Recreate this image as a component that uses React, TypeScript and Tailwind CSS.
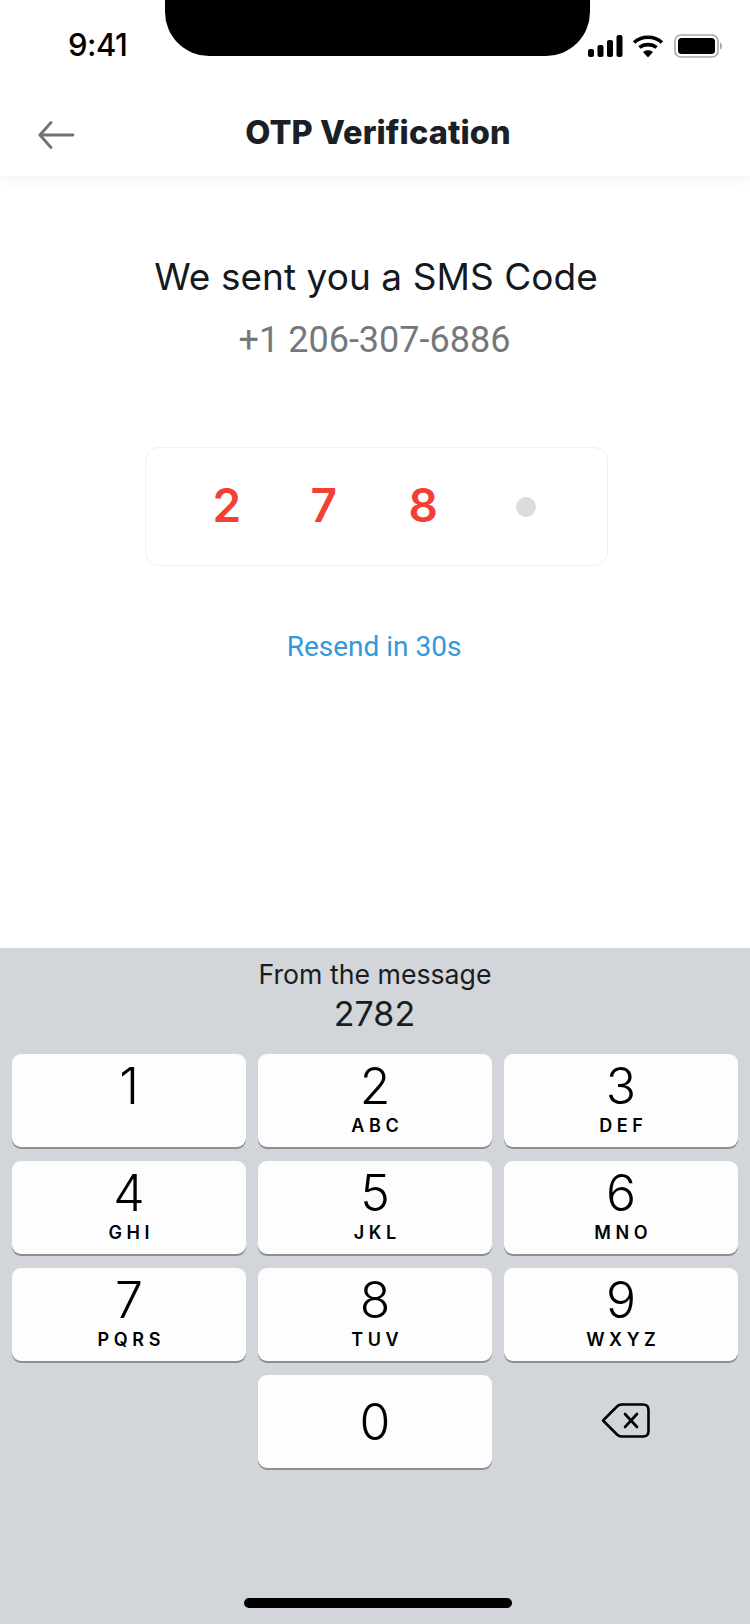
import React from "react";

const keys: [string, string][] = [
  ["1", ""],
  ["2", "ABC"],
  ["3", "DEF"],
  ["4", "GHI"],
  ["5", "JKL"],
  ["6", "MNO"],
  ["7", "PQRS"],
  ["8", "TUV"],
  ["9", "WXYZ"],
];

function Key({ n, l, center }: { n: string; l: string; center?: boolean }) {
  return (
    <div className={center ? "h-[93px] rounded-[9px] bg-[#fdfdfe] shadow-[0_2px_0_#8e8e93] flex flex-col items-center justify-center" : "h-[93px] rounded-[9px] bg-[#fdfdfe] shadow-[0_2px_0_#8e8e93] flex flex-col items-center pt-[4px]"}>
      <div className="h-[56px] leading-[56px] text-[50px] font-[350] text-black font-['Inter',sans-serif]">{n}</div>
      {!center && <div className="mt-[2px] h-[20px] leading-[20px] text-[18px] font-semibold tracking-[4.6px] pl-[4.6px] text-black font-['Inter',sans-serif]">{l}</div>}
    </div>
  );
}

export default function App() {
  return (
    <div className="relative w-[750px] h-[1624px] bg-white overflow-hidden flex flex-col font-['Liberation_Sans',sans-serif]">
      <div className="absolute z-20 left-[165px] top-0 w-[425px] h-[56px] bg-black rounded-b-[44px]" />
      <header className="h-[176px] shrink-0 bg-white shadow-[0_4px_12px_rgba(0,0,0,0.05)] z-10 flex flex-col">
        <div className="h-[90px] shrink-0 flex items-start justify-between pl-[68px] pr-[28px] pt-[27px]">
          <span className="text-[31px] leading-[36px] font-medium text-black font-['Inter',sans-serif] tracking-[-0.5px]">9:41</span>
          <div className="flex items-center mt-[7px]">
            <svg width="35" height="22" viewBox="0 0 35 22" fill="black">
              <rect x="0" y="14" width="6" height="8" rx="2" />
              <rect x="9.5" y="10" width="6" height="12" rx="2" />
              <rect x="19" y="5" width="6" height="17" rx="2" />
              <rect x="28.5" y="0" width="6" height="22" rx="2" />
            </svg>
            <svg width="32" height="24" viewBox="0 0 32 24" fill="none" stroke="black" strokeWidth="3.6" className="ml-[9px] mr-[10px]">
              <path d="M2 8.5C9.5 1.5 22.5 1.5 30 8.5" />
              <path d="M7.5 13.5C12 9.6 20 9.6 24.5 13.5" />
              <path d="M16 23.5L11 18C14 15.8 18 15.8 21 18Z" fill="black" stroke="none" />
            </svg>
            <svg width="48" height="24" viewBox="0 0 48 24" fill="none">
              <rect x="1" y="1" width="43" height="22" rx="6" stroke="#a8a8a8" strokeWidth="1.6" />
              <rect x="4" y="4" width="37" height="16" rx="3.5" fill="black" />
              <path d="M46 8.5C47.5 9 48 10.5 48 12C48 13.5 47.5 15 46 15.5Z" fill="#a8a8a8" />
            </svg>
          </div>
        </div>
        <div className="relative flex-1 flex items-center justify-center">
          <svg width="38" height="28" viewBox="0 0 38 28" fill="none" stroke="#6f7376" strokeWidth="2.8" strokeLinecap="round" strokeLinejoin="round" className="absolute left-[37px] top-[31px]">
            <path d="M36 14H3" />
            <path d="M14 1.5L3 14L14 26.5" />
          </svg>
          <h1 className="ml-[6px] text-[32.5px] leading-[40px] font-extrabold text-[#1a2026] font-['Inter',sans-serif] tracking-[0.1px]">OTP Verification</h1>
        </div>
      </header>

      <main className="flex-1 flex flex-col items-center">
        <p className="mt-[77px] text-[37px] leading-[48px] text-[#14191e] font-['Inter',sans-serif] tracking-[0.05px] ml-[2px]">We sent you a SMS Code</p>
        <p className="mt-[15px] text-[36px] leading-[48px] text-[#74787c] font-['Roboto',sans-serif] ml-[-1px]">+1 206-307-6886</p>
        <div className="mt-[83px] w-[463px] h-[119px] ml-[2px] rounded-[14px] border border-[#f0f0f0] flex items-center pl-[53px]">
          <span className="w-[98px] pl-[14px] mt-[-4px] text-[46px] leading-[52px] font-semibold text-[#f43f37] font-['Inter',sans-serif]">2</span>
          <span className="w-[98px] pl-[14px] mt-[-4px] text-[46px] leading-[52px] font-semibold text-[#f43f37] font-['Inter',sans-serif]">7</span>
          <span className="w-[121px] pl-[14px] mt-[-4px] text-[46px] leading-[52px] font-semibold text-[#f43f37] font-['Inter',sans-serif]">8</span>
          <span className="w-[20px] h-[20px] rounded-full bg-[#dcdcdc]" />
        </div>
        <p className="mt-[61px] text-[28px] leading-[40px] text-[#3498db] font-['Roboto',sans-serif] ml-[-2px]">Resend in 30s</p>
      </main>

      <section className="h-[676px] shrink-0 bg-[#d2d5da] flex flex-col">
        <div className="h-[106px] shrink-0 flex flex-col items-center pt-[8px] text-[#1a1c20] font-['Inter',sans-serif]">
          <p className="text-[26.7px] leading-[36px]">From the message</p>
          <p className="mt-[2px] mr-[1px] text-[34px] leading-[40px]">2782</p>
        </div>
        <div className="grid grid-cols-3 gap-x-[12px] gap-y-[14px] px-[12px]">
          {keys.map(([n, l]) => (
            <Key key={n} n={n} l={l} />
          ))}
          <div />
          <Key n="0" l="" center />
          <div className="flex items-center justify-center pl-[9px] pb-[2px]">
            <svg width="50" height="38" viewBox="0 0 50 38" fill="none" stroke="black" strokeWidth="2.6" strokeLinejoin="round" strokeLinecap="round">
              <path d="M2 18.5L16 4.5C17.3 3.2 18.5 2.5 20.5 2.5H42C45.5 2.5 47.5 4.5 47.5 8V29C47.5 32.5 45.5 34.5 42 34.5H20.5C18.5 34.5 17.3 33.8 16 32.5Z" />
              <path d="M24 12L36 25" />
              <path d="M36 12L24 25" />
            </svg>
          </div>
        </div>
        <div className="mt-auto mb-[16px] ml-[244px] w-[268px] h-[10px] rounded-full bg-black" />
      </section>
    </div>
  );
}
